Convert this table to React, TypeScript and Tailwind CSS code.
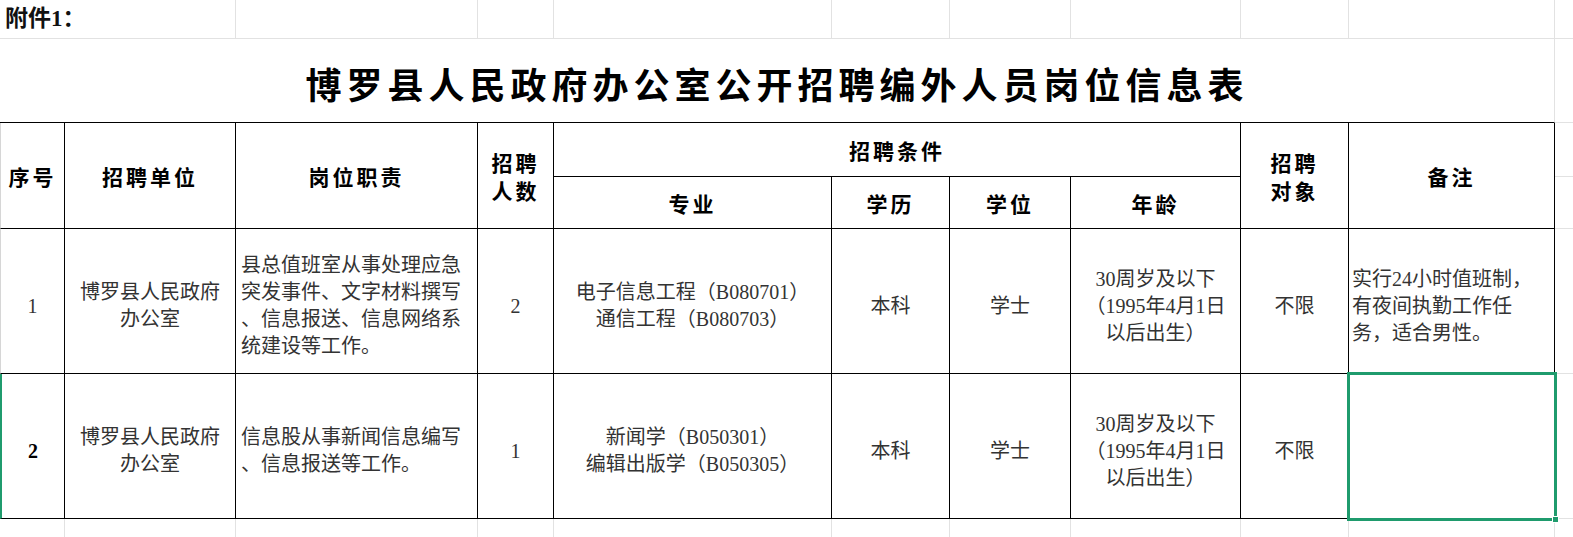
import React from "react";

const GRID =
  "grid grid-cols-[65px_171px_242px_76px_278px_118px_121px_170px_108px_206px_1fr] grid-rows-[39px_84px_54px_52px_145px_145px_18px]";
const SANS = "font-['Noto_Sans_CJK_SC','Noto_Sans',sans-serif]";
const SERIF = "font-['Liberation_Serif','Noto_Sans_CJK_SC',serif]";

const cell = "border-r border-b border-black flex items-center justify-center text-center";
const head = `${cell} ${SANS} text-[21px] font-bold tracking-[3px] leading-[28px] text-black`;
const body = `${cell} ${SERIF} text-[20px] leading-[27px] text-[#333] pt-[10px]`;
const strip = "border-b border-[#e2e2e2]";

const rows = [
  {
    no: "1",
    bold: false,
    unit: ["博罗县人民政府", "办公室"],
    duty: ["县总值班室从事处理应急", "突发事件、文字材料撰写", "、信息报送、信息网络系", "统建设等工作。"],
    count: "2",
    major: ["电子信息工程（B080701）", "通信工程（B080703）"],
    note: ["实行24小时值班制，", "有夜间执勤工作任", "务，适合男性。"],
    selected: false,
  },
  {
    no: "2",
    bold: true,
    unit: ["博罗县人民政府", "办公室"],
    duty: ["信息股从事新闻信息编写", "、信息报送等工作。"],
    count: "1",
    major: ["新闻学（B050301）", "编辑出版学（B050305）"],
    note: [],
    selected: true,
  },
];

const age = ["30周岁及以下", "（1995年4月1日", "以后出生）"];

function Lines({ items }: { items: string[] }) {
  return (
    <div>
      {items.map((t, i) => (
        <div key={i} className="whitespace-nowrap">
          {t}
        </div>
      ))}
    </div>
  );
}

export default function App() {
  return (
    <div className="w-[1573px] h-[537px] overflow-hidden bg-white">
      <div className={GRID}>
        {/* row 1 */}
        <div className={`col-span-2 border-r border-b border-[#e2e2e2] flex items-center pl-[5px] ${SERIF} text-[23px] font-bold text-[#111]`}>
          附件1：
        </div>
        {[0, 1, 2, 3, 4, 5, 6, 7].map((i) => (
          <div key={i} className="border-r border-b border-[#e2e2e2]" />
        ))}
        <div className={strip} />

        {/* title */}
        <div className="col-span-10 border-r border-r-[#e2e2e2] border-b border-b-black flex items-center justify-center pt-[4px]">
          <h1 className={`${SANS} text-[36px] font-bold tracking-[5px] text-black`}>
            博罗县人民政府办公室公开招聘编外人员岗位信息表
          </h1>
        </div>
        <div className={strip} />

        {/* header */}
        <div className={`${head} row-span-2 border-l border-l-[#d6d6d6]`}>序号</div>
        <div className={`${head} row-span-2`}>招聘单位</div>
        <div className={`${head} row-span-2`}>岗位职责</div>
        <div className={`${head} row-span-2`}>
          <Lines items={["招聘", "人数"]} />
        </div>
        <div className={`${head} col-span-4`}>招聘条件</div>
        <div className={`${head} row-span-2`}>
          <Lines items={["招聘", "对象"]} />
        </div>
        <div className={`${head} row-span-2`}>备注</div>
        <div className={strip} />
        <div className={head}>专业</div>
        <div className={head}>学历</div>
        <div className={head}>学位</div>
        <div className={head}>年龄</div>
        <div className={strip} />

        {/* data */}
        {rows.map((r) => (
          <React.Fragment key={r.no}>
            <div
              className={`${body} ${
                r.selected ? "border-l-2 border-l-[#1f9b6d]" : "border-l border-l-[#d6d6d6]"
              } ${r.bold ? "font-bold text-black" : ""}`}
            >
              {r.no}
            </div>
            <div className={body}>
              <Lines items={r.unit} />
            </div>
            <div className={`${body} justify-start text-left pl-[5px]`}>
              <Lines items={r.duty} />
            </div>
            <div className={body}>{r.count}</div>
            <div className={body}>
              <Lines items={r.major} />
            </div>
            <div className={body}>本科</div>
            <div className={body}>学士</div>
            <div className={body}>
              <Lines items={age} />
            </div>
            <div className={body}>不限</div>
            <div className={`${body} justify-start text-left pl-[3px] relative`}>
              <Lines items={r.note} />
              {r.selected && (
                <>
                  <div className="absolute -left-[2px] -top-[2px] -right-[3px] -bottom-[3px] border-[3px] border-[#1f9b6d]" />
                  <div className="absolute -right-[5px] -bottom-[5px] w-[7px] h-[7px] bg-[#1f9b6d] border border-white" />
                </>
              )}
            </div>
            <div className={strip} />
          </React.Fragment>
        ))}

        {/* tail */}
        {[0, 1, 2, 3, 4, 5, 6, 7, 8, 9].map((i) => (
          <div key={i} className="border-r border-[#e2e2e2]" />
        ))}
        <div />
      </div>
    </div>
  );
}
